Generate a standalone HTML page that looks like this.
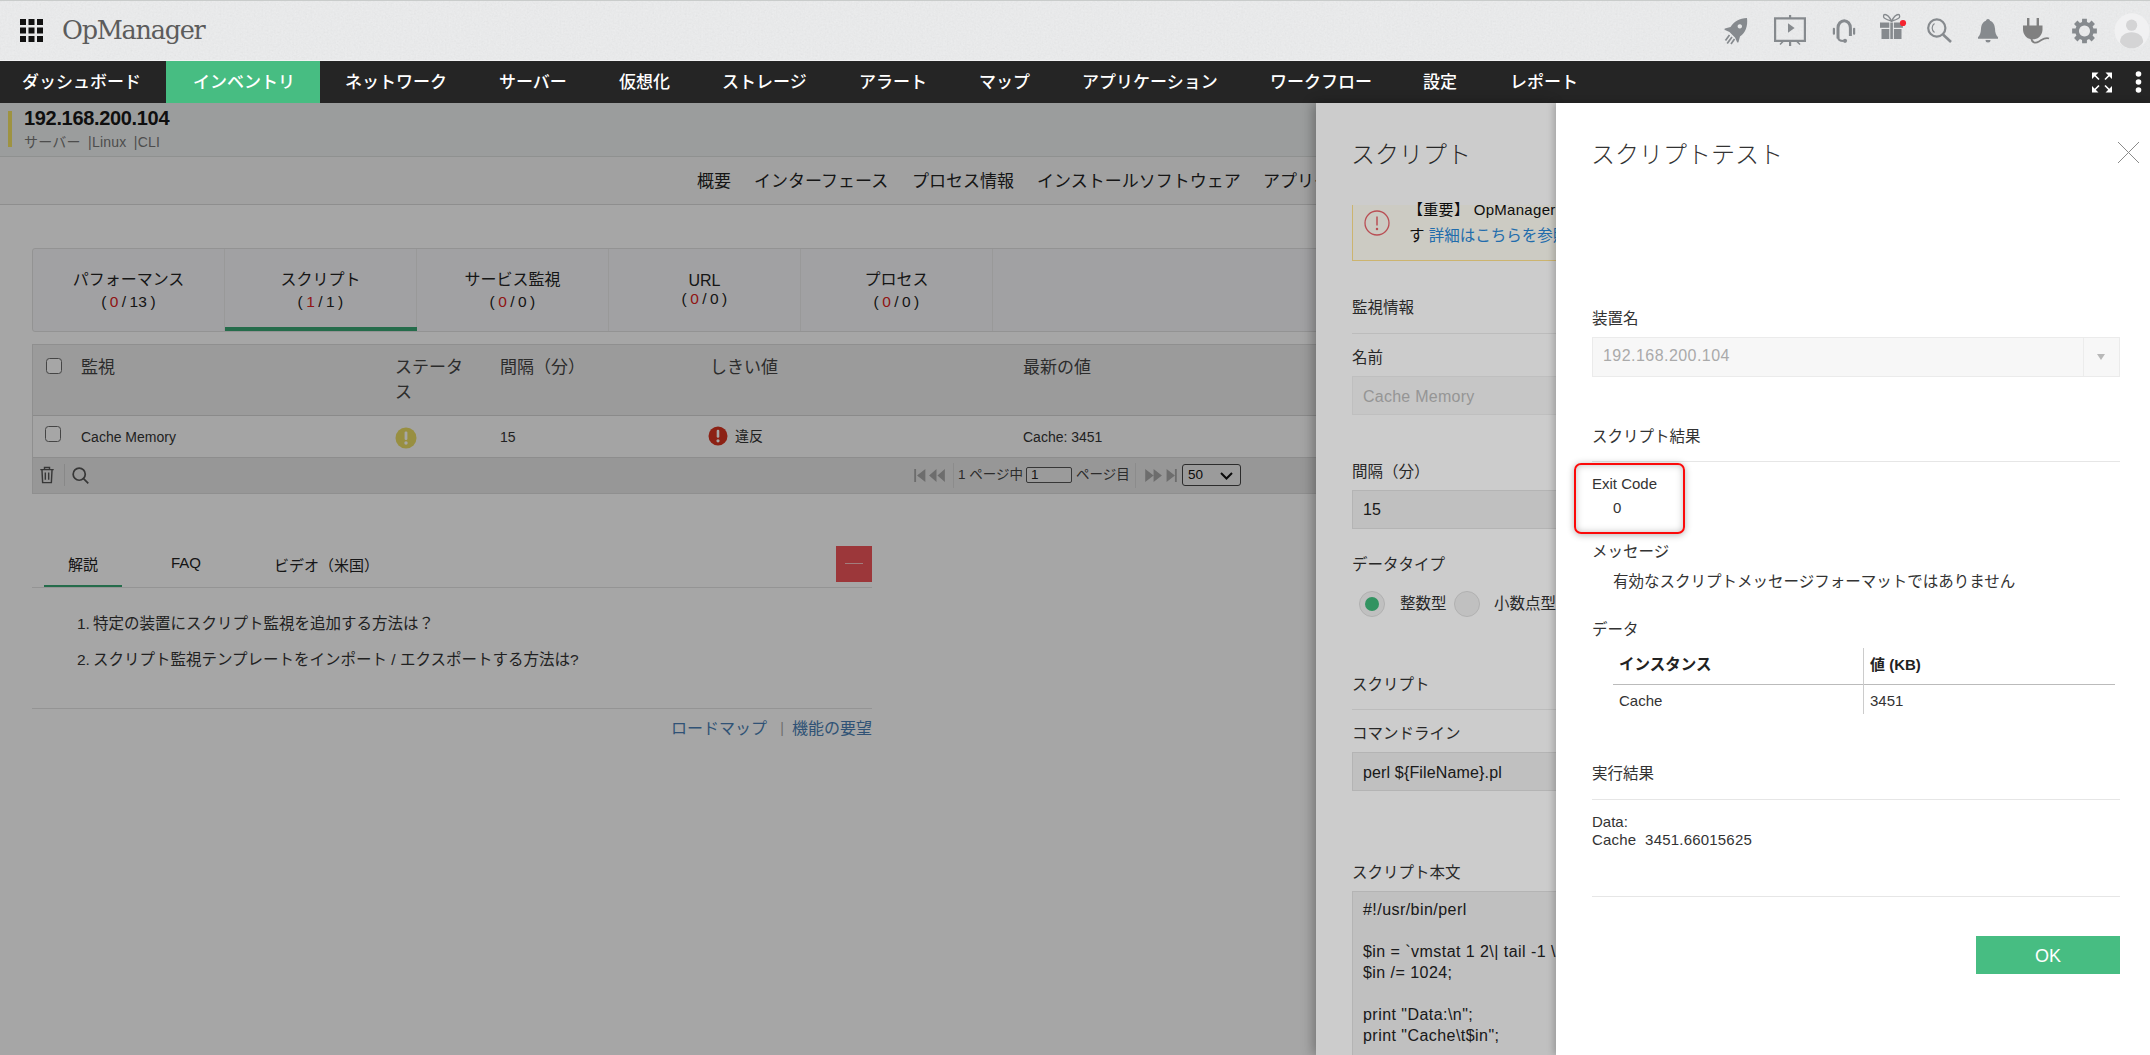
<!DOCTYPE html>
<html lang="ja">
<head>
<meta charset="utf-8">
<title>OpManager</title>
<style>
*{box-sizing:border-box;margin:0;padding:0}
html,body{width:2150px;height:1055px;overflow:hidden;background:#fff}
body{font-family:"Liberation Sans","Noto Sans CJK JP",sans-serif;color:#333;font-size:16px;position:relative}
.abs{position:absolute;white-space:nowrap}
/* header */
#hdr{position:absolute;left:0;top:0;width:2150px;height:61px;background:#eeeff0;border-top:1px solid #c9cccb;border-bottom:1px solid #f2f2f3}
#logo{position:absolute;left:62px;top:13px;font-family:"DejaVu Serif","Liberation Serif",serif;font-size:25.5px;color:#5c5c5c;letter-spacing:-1.25px;line-height:32px}
#nav{position:absolute;left:0;top:61px;width:2150px;height:42px;background:#252525}
#nav .it{position:absolute;top:0;height:42px;line-height:43px;color:#fff;font-size:17px;font-weight:500;white-space:nowrap}
#nav .act{position:absolute;left:166px;top:0;width:154px;height:42px;background:#47bd82}
/* page */
#page{position:absolute;left:0;top:103px;width:2150px;height:952px;background:#fff}
#dim1{position:absolute;left:0;top:103px;width:1316px;height:952px;background:rgba(0,0,0,.35)}
#mid{position:absolute;left:1316px;top:103px;width:240px;height:952px;background:#fff;overflow:hidden}
#midsh{position:absolute;left:1316px;top:103px;width:240px;height:952px;box-shadow:-3px 0 11px rgba(0,0,0,.3)}
#dim2{position:absolute;left:1316px;top:103px;width:240px;height:952px;background:rgba(0,0,0,.2)}
#right{position:absolute;left:1556px;top:103px;width:594px;height:952px;background:#fff;box-shadow:-2px 0 7px rgba(0,0,0,.22)}

/* left page */
#dev{position:absolute;left:0;top:0;width:2150px;height:54px;background:#eff2f1;border-bottom:1px solid #dcdfde}
#dev .bar{position:absolute;left:8px;top:8px;width:4px;height:36px;background:#f3e265}
#dev .ip{position:absolute;left:24px;top:4px;font-size:20px;font-weight:bold;color:#181818;letter-spacing:-.33px}
#dev .sub{position:absolute;left:24px;top:28px;font-size:14px;color:#777;letter-spacing:.25px;word-spacing:3px}
#tabs{position:absolute;left:0;top:54px;width:2150px;height:48px;background:#f7f8f8;border-bottom:1px solid #dadada}
#tabs span{position:absolute;top:1px;line-height:48px;font-size:17px;color:#222;white-space:nowrap}
#mon{position:absolute;left:32px;top:145px;width:1400px;height:84px;background:#f8f8fa;border:1px solid #e2e2e2;border-radius:3px}
#mon .t{position:absolute;top:0;width:192px;height:82px;border-right:1px solid #ebebeb;text-align:center;font-size:16px;color:#222;line-height:23px;padding-top:19px}
#mon .t i{font-style:normal;color:#d22}
#mon .t .c{letter-spacing:.3px;word-spacing:-1.5px;font-size:15.5px;position:relative;top:-1.5px}
#mon .ul{position:absolute;left:192px;top:78px;width:192px;height:4px;background:#3aa773}
#grid{position:absolute;left:32px;top:241px;width:1400px;height:150px;border:1px solid #dcdcdc}
#grid .hd{position:absolute;left:0;top:0;width:100%;height:71px;background:#eeeeee;border-bottom:1px solid #d5d5d5}
#grid .hd span{position:absolute;top:10px;font-size:17px;color:#444;line-height:25px}
#grid .row{position:absolute;left:0;top:71px;width:100%;height:42px;background:#fcfcfc;border-bottom:1px solid #d9d9d9}
#grid .row span{position:absolute;top:13px;font-size:14px;color:#333}
#grid .ft{position:absolute;left:0;top:113px;width:100%;height:35px;background:#e9e9e9}
.cb{position:absolute;width:16px;height:16px;border:1.500px solid #6a6a6a;border-radius:3.500px;background:#fff}
#help .tb{position:absolute;top:450px;font-size:16px;color:#222}

#grid .ft svg,#grid .ft span,#grid .ft div{position:absolute}
#help{position:absolute;left:32px;top:440px;width:840px;height:300px}
#help .tb{position:absolute;top:11px;font-size:15px;color:#222;white-space:nowrap}
#help .li{position:absolute;left:45px;font-size:15.5px;color:#333;white-space:nowrap}
#help .lk{position:absolute;top:172px;font-size:16px;color:#4a7fb5;white-space:nowrap}

/* middle panel */
#mid .h{position:absolute;left:35px;top:32px;font-size:24px;color:#333;font-weight:300;white-space:nowrap;font-family:"Liberation Sans","Noto Sans CJK JP",sans-serif}
#mid .lb{position:absolute;left:36px;margin-top:-1px;font-size:15.5px;color:#333;white-space:nowrap}
#mid .ln{position:absolute;left:36px;width:300px;height:1px;background:#ebebeb}
#mid .in{position:absolute;left:36px;width:300px;height:39px;background:#f4f4f4;border:1px solid #e4e4e4;font-size:16px;line-height:37px;padding-left:10px;color:#333;white-space:nowrap}
/* right panel */
#right .h{position:absolute;left:35px;top:32px;font-size:24px;color:#333;font-weight:300;white-space:nowrap}
#right .lb{position:absolute;left:36px;margin-top:-1px;font-size:15.5px;color:#333;white-space:nowrap}
#right .ln{position:absolute;left:36px;width:528px;height:1px;background:#e6e6e6}
#right .tx{position:absolute;font-size:15px;color:#333;white-space:nowrap}
</style>
</head>
<body>
<div id="hdr">
  <svg class="abs" style="left:0;top:0" width="2150" height="59" viewBox="0 0 2150 59"><filter id="nz" x="0" y="0" width="100%" height="100%"><feTurbulence type="fractalNoise" baseFrequency=".55" numOctaves="2" seed="3"/><feColorMatrix type="matrix" values=".33 .33 .33 0 0 .33 .33 .33 0 0 .33 .33 .33 0 0 0 0 0 0 1"/></filter><rect width="2150" height="59" filter="url(#nz)" opacity=".1"/></svg><div id="logo">OpManager</div>
<svg class="abs" style="left:0;top:-1px" width="2150" height="61" viewBox="0 0 2150 61">
 <g fill="#111">
  <rect x="20" y="19" width="6" height="6"/><rect x="28.500" y="19" width="6" height="6"/><rect x="37" y="19" width="6" height="6"/>
  <rect x="20" y="27.500" width="6" height="6"/><rect x="28.500" y="27.500" width="6" height="6"/><rect x="37" y="27.500" width="6" height="6"/>
  <rect x="20" y="36" width="6" height="6"/><rect x="28.500" y="36" width="6" height="6"/><rect x="37" y="36" width="6" height="6"/>
 </g>
 <g fill="#868a8e" stroke="none">
  <path d="M1747 18c-7.500 0-13 3.500-16.500 9l-5.500 1.500c-.8.300-.8 1 0 1.500l4.500 2 5.500 5.500 2 4.500c.5.800 1.200.800 1.500 0l1.500-5.500c5.500-3.500 8-10.500 7-18.500zM1739.800 24.200a2.200 2.200 0 1 0 .01 0z" fill-rule="evenodd"/>
  <path d="M1729.500 35l-4 5.500M1732 37l-4.800 6.500M1734.500 39l-3.500 5" stroke="#868a8e" stroke-width="1.700" fill="none"/>
  <path d="M1775.100 18.400h29.800v22.400h-29.800z" fill="none" stroke="#868a8e" stroke-width="2.200"/>
  <rect x="1789" y="15" width="2.200" height="3"/><rect x="1789" y="41" width="2.200" height="5"/>
  <path d="M1788 23.300v9.400l6.600-4.700z"/>
  <path d="M1783 41.500l-3 3M1797 41.500l3 3" stroke="#868a8e" stroke-width="1.600"/>
  <path d="M1838 38.500v-10.500a6.200 7.300 0 0 1 12.400 0v8" fill="none" stroke="#868a8e" stroke-width="3"/>
  <rect x="1832.800" y="27.800" width="2.200" height="7" rx="1"/><rect x="1853" y="27.800" width="2.200" height="7" rx="1"/>
  <path d="M1838 37c0 3 2 4 5.500 4" fill="none" stroke="#868a8e" stroke-width="2"/>
  <circle cx="1845" cy="40.800" r="2.100"/>
  <rect x="1880" y="22.500" width="9.300" height="5.300"/><rect x="1890.300" y="22.500" width="2.600" height="16.500"/><rect x="1893.900" y="22.500" width="9" height="5.300"/>
  <rect x="1881.500" y="29" width="7.800" height="10"/><rect x="1893.900" y="29" width="7.600" height="10"/>
  <path d="M1891.500 21c-1.500-3-4-6.500-6.500-6.500-2 0-2 3 0 4 1.500 1 4 1.800 6.500 2.500zM1891.700 21c1.500-3 4-6.500 6.500-6.500 2 0 2 3 0 4-1.500 1-4 1.800-6.500 2.500z" fill="none" stroke="#868a8e" stroke-width="1.300"/>
  <circle cx="1903" cy="23" r="3.100" fill="#f5242f"/>
  <circle cx="1936.800" cy="28" r="8.600" fill="none" stroke="#868a8e" stroke-width="2.200"/>
  <path d="M1943 34.500l8 7.500" stroke="#868a8e" stroke-width="2.600" fill="none"/>
  <path d="M1934.500 23.500a5.500 5.500 0 0 0 0 9" stroke="#868a8e" stroke-width="1.200" fill="none"/>
  <path d="M1988 19c1.200 0 1.800.8 2 1.800 3.500 1.200 4.800 4.500 5 8 .2 4 .8 6 3 8.500v1.500h-20v-1.500c2.200-2.500 2.800-4.500 3-8.500.2-3.500 1.500-6.800 5-8 .2-1 .8-1.800 2-1.800z"/>
  <path d="M1985.500 40h5a2.500 2.500 0 0 1-5 0z"/>
  <g fill="#808080"><rect x="2027" y="18" width="2.400" height="8"/><rect x="2036.600" y="18" width="2.400" height="8"/>
  <path d="M2023 25.500h19.500v4c0 5-3.500 9-8 9.800h-3.500c-4.500-.8-8-4.800-8-9.800z"/>
  <path d="M2031.500 38c0 5 4 5.500 7.500 3.500 3.500-2 6-4.500 10-3" fill="none" stroke="#808080" stroke-width="1.800"/></g>
  <path d="M2093.46 28.52L2096.87 28.62L2096.87 33.38L2093.46 33.48L2092.59 35.58L2094.93 38.07L2091.57 41.43L2089.08 39.09L2086.98 39.96L2086.88 43.37L2082.12 43.37L2082.02 39.96L2079.92 39.09L2077.43 41.43L2074.07 38.07L2076.41 35.58L2075.54 33.48L2072.13 33.38L2072.13 28.62L2075.54 28.52L2076.41 26.42L2074.07 23.93L2077.43 20.57L2079.92 22.91L2082.02 22.04L2082.12 18.63L2086.88 18.63L2086.98 22.04L2089.08 22.91L2091.57 20.57L2094.93 23.93L2092.59 26.42Z M2084.500 25.500a5.500 5.500 0 1 0 .01 0z" fill-rule="evenodd"/>
  <circle cx="2132" cy="30.800" r="17.500" fill="#f1f1f2"/>
  <circle cx="2131.600" cy="25.200" r="5.600" fill="#d4d4d5"/>
  <path d="M2120 42c0-6 5-9.800 11.600-9.800s11.600 3.800 11.600 9.800c-2.500 4-6.500 6.300-11.600 6.300s-9-2.300-11.600-6.300z" fill="#d4d4d5"/>
 </g>
</svg>

</div>
<div id="nav">
  <div class="act"></div>
  <div class="it" style="left:22px">ダッシュボード</div>
  <div class="it" style="left:193px">インベントリ</div>
  <div class="it" style="left:345px">ネットワーク</div>
  <div class="it" style="left:499px">サーバー</div>
  <div class="it" style="left:619px">仮想化</div>
  <div class="it" style="left:722px">ストレージ</div>
  <div class="it" style="left:859px">アラート</div>
  <div class="it" style="left:979px">マップ</div>
  <div class="it" style="left:1082px">アプリケーション</div>
  <div class="it" style="left:1270px">ワークフロー</div>
  <div class="it" style="left:1423px">設定</div>
  <div class="it" style="left:1510px">レポート</div>
<svg class="abs" style="left:2090px;top:8px" width="60" height="28" viewBox="2090 69 60 28">
 <g fill="none" stroke="#fff" stroke-width="1.700"><path d="M2093.500 74l5.500 5.500M2110.500 74l-5.500 5.500M2093.500 91l5.500-5.500M2110.500 91l-5.500-5.500"/></g>
 <g fill="#fff"><path d="M2092 72.500h6.500l-6.500 6.500zM2112 72.500h-6.500l6.500 6.500zM2092 92.500h6.500l-6.500-6.500zM2112 92.500h-6.500l6.500-6.500z"/>
 <circle cx="2138.500" cy="74" r="2.800"/><circle cx="2138.500" cy="82" r="2.800"/><circle cx="2138.500" cy="90" r="2.800"/></g>
</svg>

</div>
<div id="page">

<div id="dev"><div class="bar"></div><div class="ip">192.168.200.104</div><div class="sub">サーバー |Linux |CLI</div></div>
<div id="tabs">
 <span style="left:697px">概要</span><span style="left:754px">インターフェース</span><span style="left:912px">プロセス情報</span><span style="left:1037px">インストールソフトウェア</span><span style="left:1263px">アプリケーション</span>
</div>
<div id="mon">
 <div class="t" style="left:0">パフォーマンス<br><span class="c">( <i>0</i> / 13 )</span></div>
 <div class="t" style="left:192px">スクリプト<br><span class="c">( <i>1</i> / 1 )</span></div>
 <div class="t" style="left:384px">サービス監視<br><span class="c">( <i>0</i> / 0 )</span></div>
 <div class="t" style="left:576px;padding-top:22px;line-height:19px">URL<br><span class="c">( <i>0</i> / 0 )</span></div>
 <div class="t" style="left:768px">プロセス<br><span class="c">( <i>0</i> / 0 )</span></div>
 <div class="ul"></div>
</div>
<div id="grid">
 <div class="hd">
  <div class="cb" style="left:13px;top:12.500px"></div>
  <span style="left:48px">監視</span><span style="left:362px">ステータ<br>ス</span><span style="left:467px">間隔（分）</span><span style="left:677px">しきい値</span><span style="left:990px">最新の値</span>
 </div>
 <div class="row">
  <div class="cb" style="left:12px;top:9.500px"></div>
  <span style="left:48px">Cache Memory</span>
  <svg class="abs" style="left:362px;top:11px" width="22" height="22" viewBox="0 0 22 22"><circle cx="11" cy="11" r="10.5" fill="#eadc65"/><rect x="9.6" y="4.5" width="2.8" height="8.5" rx="1.2" fill="#fff"/><circle cx="11" cy="16" r="1.7" fill="#fff"/></svg>
  <span style="left:467px">15</span>
  <svg class="abs" style="left:675px;top:10px" width="20" height="20" viewBox="0 0 20 20"><circle cx="10" cy="10" r="9.5" fill="#d73320"/><rect x="8.7" y="3.8" width="2.6" height="8" rx="1.2" fill="#fff"/><circle cx="10" cy="14.8" r="1.6" fill="#fff"/></svg>
  <span style="left:702px;top:9px;font-size:14px">違反</span>
  <span style="left:990px">Cache: 3451</span>
 </div>
 <div class="ft">
  <svg style="left:5px;top:7px" width="18" height="18.500" viewBox="0 0 20 22" fill="none" stroke="#555" stroke-width="1.700"><path d="M2 5.5h16M7 5.5V3h6v2.5M4 5.5l.8 15.5h10.400l.8-15.500M8 9v8.500M12 9v8.500"/></svg>
  <div style="left:31px;top:6px;width:1px;height:22px;background:#d2d2d2"></div>
  <svg style="left:38px;top:8px" width="19" height="19" viewBox="0 0 22 22" fill="none" stroke="#555" stroke-width="2"><circle cx="9.500" cy="9.500" r="7"/><path d="M14.500 14.500L20 20"/></svg>
  <svg style="left:879px;top:11px" width="36" height="13" viewBox="0 0 34 14" fill="#a8a8a8"><rect x="0" y="0" width="2" height="14"/><path d="M12 0v14L3 7zM24 0v14L16 7zM33 0v14L25 7z"/></svg>
  <div style="left:920px;top:5px;width:1px;height:25px;background:#d8d8d8"></div>
  <span style="left:925px;top:5px;font-size:13.500px;color:#444">1 ページ中</span>
  <div style="left:993px;top:9px;width:46px;height:16px;border:1px solid #555;border-radius:2px;background:#efefef;font-size:13.500px;line-height:13px;padding-left:4px;color:#222">1</div>
  <span style="left:1043px;top:5px;font-size:13.500px;color:#444">ページ目</span>
  <div style="left:1102px;top:5px;width:1px;height:25px;background:#d8d8d8"></div>
  <svg style="left:1110px;top:11px" width="36" height="13" viewBox="0 0 34 14" fill="#a8a8a8"><path d="M0 0v14L9 7zM9 0v14L18 7zM23 0v14L32 7z"/><rect x="32" y="0" width="2" height="14"/></svg>
  <div style="left:1149px;top:6px;width:59px;height:22px;border:1px solid #444;border-radius:3px;background:#efefef;font-size:13.500px;line-height:19px;padding-left:5px;color:#111">50</div>
  <svg style="left:1187px;top:14px" width="13" height="8" viewBox="0 0 13 8" fill="none" stroke="#111" stroke-width="2"><path d="M1 1l5.500 5.500L12 1"/></svg>
 </div>
</div>

<div id="help">
 <span class="tb" style="left:36px;top:10px">解説</span><span class="tb" style="left:139px">FAQ</span><span class="tb" style="left:242px">ビデオ（米国）</span>
 <div class="abs" style="left:12px;top:42px;width:78px;height:2px;background:#3aa773"></div>
 <div class="abs" style="left:0;top:44px;width:840px;height:1px;background:#e3e3e3"></div>
 <div class="abs" style="left:804px;top:3px;width:36px;height:36px;background:#f0555a"><div style="position:absolute;left:9px;top:17px;width:18px;height:1px;background:#f9c0c0"></div></div>
 <span class="li" style="top:67.500px">1.&thinsp;特定の装置にスクリプト監視を追加する方法は？</span>
 <span class="li" style="top:103.500px">2.&thinsp;スクリプト監視テンプレートをインポート / エクスポートする方法は?</span>
 <div class="abs" style="left:0;top:165px;width:840px;height:1px;background:#e3e3e3"></div>
 <span class="lk" style="right:105px">ロードマップ</span><span class="lk" style="right:88px;color:#aaa;font-size:14px;top:177px">|</span><span class="lk" style="right:0">機能の要望</span>
</div>

</div>
<div id="dim1"></div>
<div id="midsh"></div>
<div id="mid">

<div class="h">スクリプト</div>
<div class="abs" style="left:36px;top:102px;width:300px;height:56px;background:#fffef4;border:1px solid #ffe28b;border-top:none"></div>
<svg class="abs" style="left:48px;top:107px" width="26" height="26" viewBox="0 0 26 26" fill="none" stroke="#e8636a" stroke-width="1.3"><circle cx="13" cy="13" r="12"/><path d="M13 6.500v9" stroke-width="1.5"/><circle cx="13" cy="19" r=".6" fill="#e8636a"/></svg>
<div class="abs" style="left:92px;top:96px;font-size:15px;color:#111;letter-spacing:.3px;height:20px;overflow:hidden;line-height:22px;margin-top:2px"><span style="position:relative;top:-2px">【重要】 OpManager</span></div>
<div class="abs" style="left:93px;top:120px;font-size:15.5px;color:#111">す <span style="color:#2a88d8">詳細はこちらを参照</span></div>
<div class="lb" style="top:193px">監視情報</div>
<div class="ln" style="top:230px"></div>
<div class="lb" style="top:243px">名前</div>
<div class="in" style="top:273px;background:#f8f8f8;border-color:#efefef;color:#bbb;line-height:39px;letter-spacing:.25px">Cache Memory</div>
<div class="lb" style="top:357px">間隔（分）</div>
<div class="in" style="top:387px;background:#f0f0f0;border-color:#e1e1e1;color:#222">15</div>
<div class="lb" style="top:450px">データタイプ</div>
<div class="abs" style="left:43px;top:488px;width:26px;height:26px;border-radius:50%;background:#f1f1f1;border:1px solid #ddd"><div style="position:absolute;left:5px;top:5px;width:14px;height:14px;border-radius:50%;background:#3fb87a"></div></div>
<div class="abs" style="left:84px;top:488px;font-size:15.5px">整数型</div>
<div class="abs" style="left:138px;top:488px;width:26px;height:26px;border-radius:50%;background:#f1f1f1;border:1px solid #ddd"></div>
<div class="abs" style="left:178px;top:488px;font-size:15.5px">小数点型</div>
<div class="lb" style="top:570px">スクリプト</div>
<div class="ln" style="top:606px"></div>
<div class="lb" style="top:619px">コマンドライン</div>
<div class="in" style="top:649px;background:#f0f0f0;border-color:#e1e1e1;color:#222;line-height:39px;letter-spacing:.15px">perl ${FileName}.pl</div>
<div class="lb" style="top:758px">スクリプト本文</div>
<div class="in" style="top:788px;height:200px;background:#f0f0f0;border-color:#e1e1e1;color:#222;line-height:21px;padding-top:7px;white-space:pre;letter-spacing:.45px">#!/usr/bin/perl

$in = `vmstat 1 2\| tail -1 \| awk
$in /= 1024;

print "Data:\n";
print "Cache\t$in";</div>

</div>
<div id="dim2"></div>
<div id="right">

<div class="h">スクリプトテスト</div>
<svg class="abs" style="left:561px;top:38px" width="23" height="23" viewBox="0 0 23 23" stroke="#8a8a8a" stroke-width="1"><path d="M1 1l21 21M22 1L1 22"/></svg>
<div class="lb" style="top:204px">装置名</div>
<div class="abs" style="left:36px;top:234px;width:528px;height:40px;background:#f7f7f7;border:1px solid #ebebeb"></div>
<div class="abs" style="left:47px;top:244px;font-size:16px;color:#aaa;letter-spacing:.45px">192.168.200.104</div>
<div class="abs" style="left:527px;top:235px;width:1px;height:38px;background:#ececec"></div>
<svg class="abs" style="left:541px;top:251px" width="8" height="6" viewBox="0 0 8 6"><path d="M0 0h8L4 6z" fill="#b8b8b8"/></svg>
<div class="lb" style="top:322px">スクリプト結果</div>
<div class="ln" style="top:358px"></div>
<div class="abs" style="left:17.500px;top:360px;width:111px;height:71px;border:2.300px solid #fb0a0a;border-radius:7px;box-shadow:0 1px 7px rgba(0,0,0,.3),inset 0 0 7px rgba(0,0,0,.25)"></div>
<div class="tx" style="left:36px;top:372px">Exit Code</div>
<div class="tx" style="left:57px;top:396px">0</div>
<div class="lb" style="top:437px">メッセージ</div>
<div class="tx" style="left:57px;top:466px;font-size:15.5px">有効なスクリプトメッセージフォーマットではありません</div>
<div class="lb" style="top:515px">データ</div>
<div class="abs" style="left:57px;top:581px;width:502px;height:1px;background:#bbb"></div>
<div class="abs" style="left:307px;top:545px;width:1px;height:66px;background:#ccc"></div>
<div class="tx" style="left:63px;top:549px;font-weight:bold;font-size:15.5px;color:#222">インスタンス</div>
<div class="tx" style="left:314px;top:550px;font-weight:bold;font-size:15px;color:#222">値 (KB)</div>
<div class="tx" style="left:63px;top:589px">Cache</div>
<div class="tx" style="left:314px;top:589px">3451</div>
<div class="lb" style="top:659px">実行結果</div>
<div class="ln" style="top:696px"></div>
<div class="tx" style="left:36px;top:710px">Data:</div>
<div class="tx" style="left:36px;top:728px;letter-spacing:.2px">Cache&nbsp; 3451.66015625</div>
<div class="ln" style="top:793px"></div>
<div class="abs" style="left:420px;top:833px;width:144px;height:38px;background:#47bd82;color:#fff;font-size:18px;line-height:40px;text-align:center">OK</div>

</div>
</body>
</html>
